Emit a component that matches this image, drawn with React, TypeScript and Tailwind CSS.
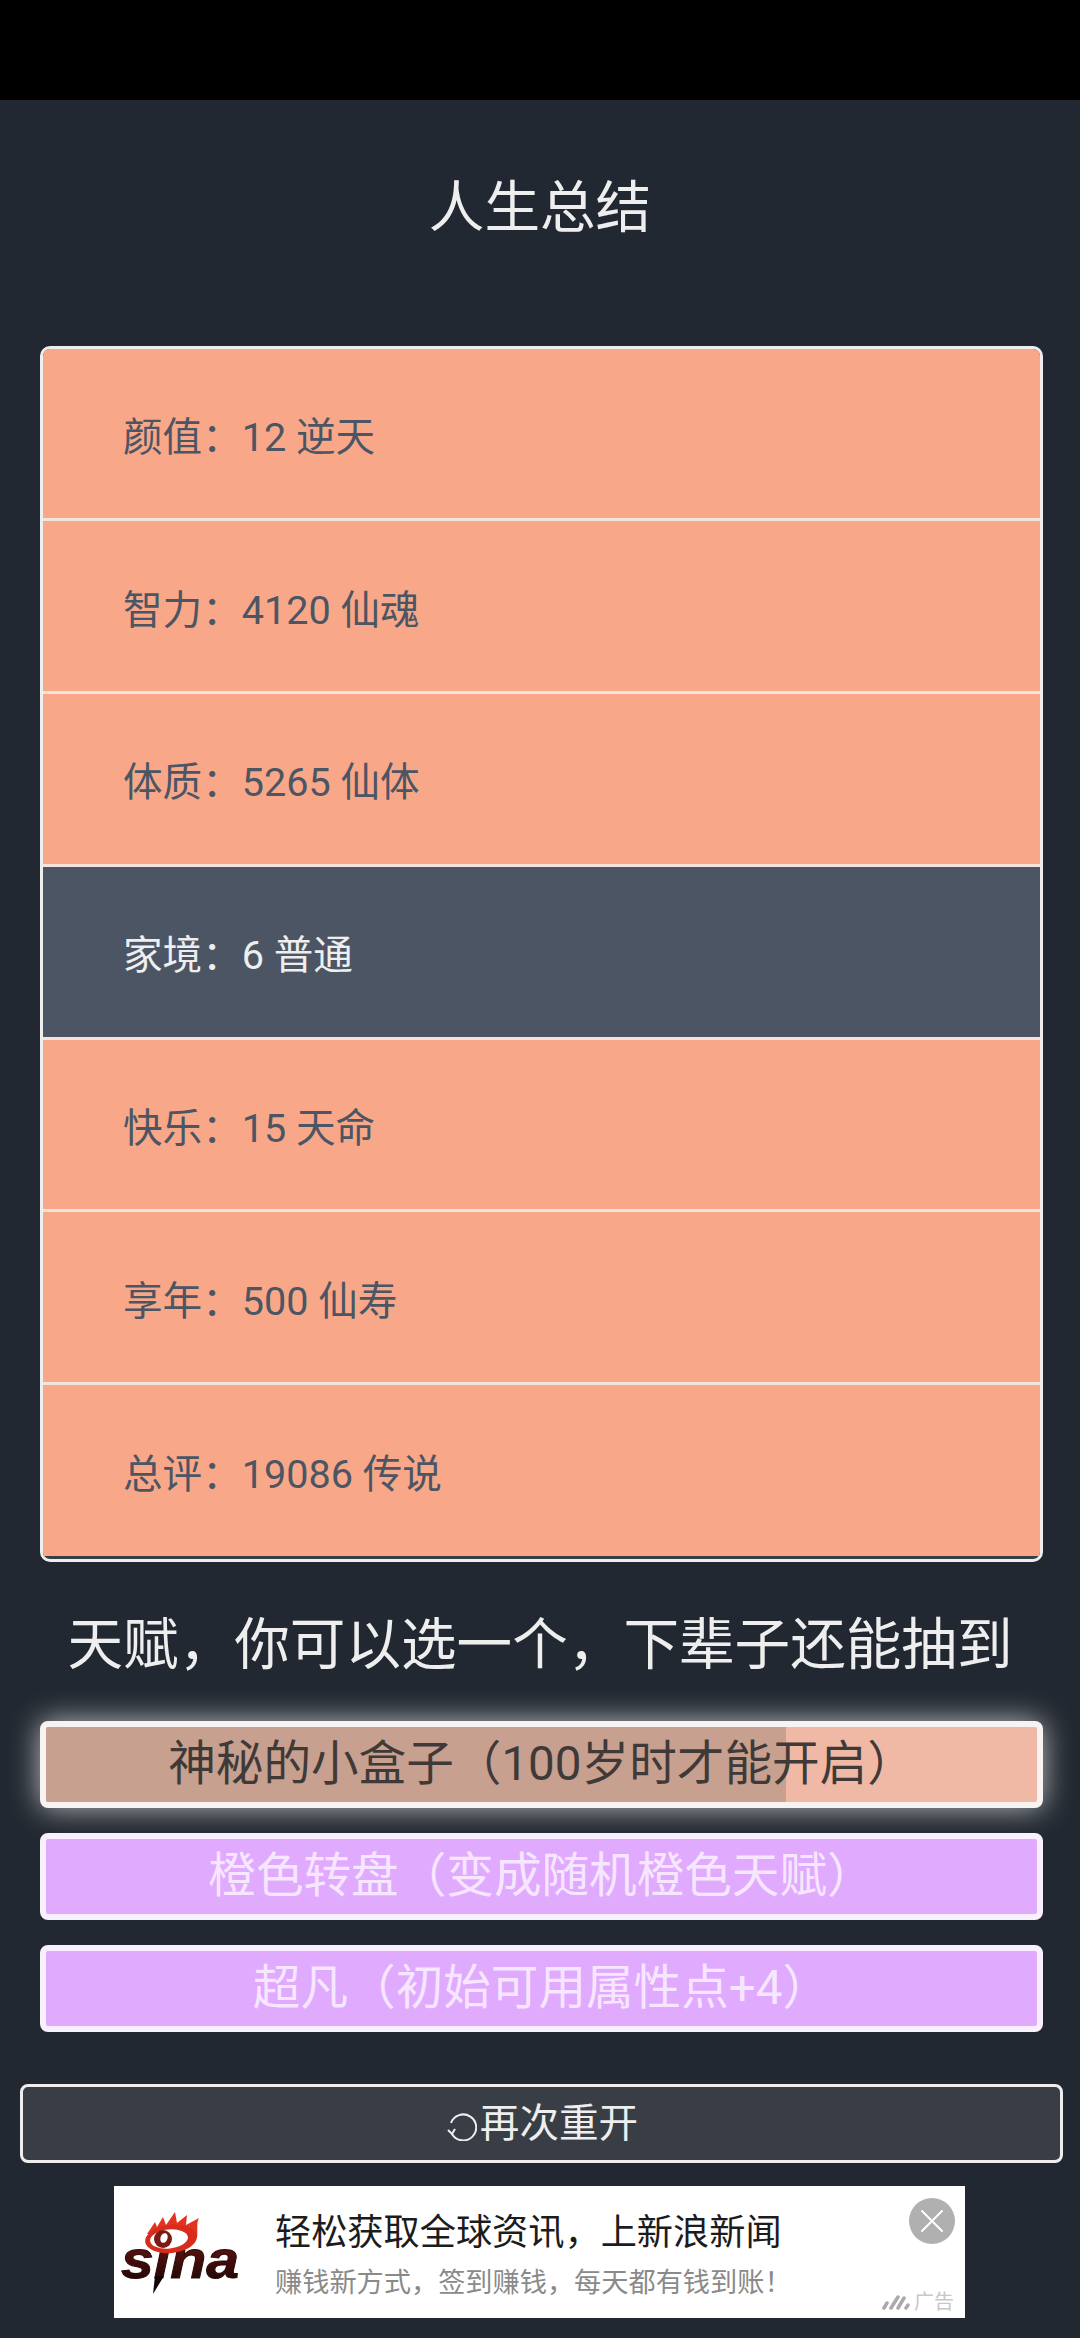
const FONT = "font-['Roboto','Noto_Sans_CJK_SC',sans-serif]";

const SUMMARY = [
  { label: '颜值：12 逆天', grade: 'orange' },
  { label: '智力：4120 仙魂', grade: 'orange' },
  { label: '体质：5265 仙体', grade: 'orange' },
  { label: '家境：6 普通', grade: 'plain' },
  { label: '快乐：15 天命', grade: 'orange' },
  { label: '享年：500 仙寿', grade: 'orange' },
  { label: '总评：19086 传说', grade: 'orange' },
];

const TALENTS = ['橙色转盘（变成随机橙色天赋）', '超凡（初始可用属性点+4）'];

function SinaLogo() {
  return (
    <svg width="120" height="86" viewBox="0 0 120 86">
      <defs>
        <linearGradient id="sinaText" x1="0" y1="0" x2="0" y2="1">
          <stop offset="0" stopColor="#7a1712" />
          <stop offset="1" stopColor="#120505" />
        </linearGradient>
      </defs>
      <text
        x="0"
        y="68"
        fontFamily="'Liberation Sans', sans-serif"
        fontWeight="700"
        fontStyle="italic"
        fontSize="54"
        textLength="118"
        lengthAdjust="spacingAndGlyphs"
        fill="url(#sinaText)"
        stroke="#2a0a08"
        strokeWidth="1"
      >
        sina
      </text>
      <path d="M34 66 L43 66 L32 84 Z" fill="#120505" />
      {/* flame crown */}
      <path
        d="M26 24 L34 12 L36 17 L42 7 L45 15 L54 2 L56 13 L66 5 L65 15 L78 8 C75 13 77 20 76 28 L50 24 Z"
        fill="#e2331f"
      />
      {/* eye */}
      <ellipse cx="50" cy="29" rx="26" ry="14" fill="#d92b1c" transform="rotate(-6 50 29)" />
      <ellipse cx="48" cy="29" rx="19" ry="9.5" fill="#ffffff" transform="rotate(-6 48 29)" />
      <ellipse cx="42" cy="29" rx="9" ry="9" fill="#7a1a12" />
      <ellipse cx="43" cy="28" rx="3.5" ry="5" fill="#ffffff" transform="rotate(20 43 28)" />
    </svg>
  );
}

function AdBanner() {
  return (
    <div className={`relative ml-[114px] mt-[22.5px] flex h-[132px] w-[851px] items-start bg-white ${FONT}`}>
      <div className="ml-[7px] mt-[24px] shrink-0">
        <SinaLogo />
      </div>
      <div className="ml-[34px] flex flex-col">
        <span className="mt-[24px] text-[36.2px] leading-[46px] text-[#1c1c1c]">轻松获取全球资讯，上新浪新闻</span>
        <span className="mt-[9px] text-[27.2px] leading-[36px] text-[#8a8a8a]">赚钱新方式，签到赚钱，每天都有钱到账！</span>
      </div>
      {/* close button */}
      <div className="absolute left-[795px] top-[12px] flex h-[46px] w-[46px] items-center justify-center rounded-full bg-[#b0b0b0]">
        <svg width="28" height="28" viewBox="0 0 28 28" stroke="#fff" strokeWidth="2" strokeLinecap="round">
          <path d="M4 4 L24 24 M24 4 L4 24" />
        </svg>
      </div>
      {/* ad mark */}
      <div className="absolute bottom-[2px] right-[11px] flex items-center gap-[3px] text-[20px] leading-[28px] text-[#c8c8c8]">
        <svg width="30" height="16" viewBox="0 0 30 16" stroke="#aaaaaa" strokeWidth="3.5" strokeLinecap="round">
          <path d="M3 14 L6 9 M10 14 L17 3 M17 14 L23 4 M25 14 L27 11" />
        </svg>
        <span>广告</span>
      </div>
    </div>
  );
}

export default function App() {
  return (
    <div className={`flex h-[2338px] w-[1080px] flex-col overflow-hidden bg-[#222831] ${FONT}`}>
      <div className="h-[100px] shrink-0 bg-black" />

      <h1 className="mt-[75px] text-center text-[55.6px] leading-[66px] text-[#eeeeee]">人生总结</h1>

      {/* summary table */}
      <div className="ml-[40px] mr-[37px] mt-[104.5px] overflow-hidden rounded-[10px] border-[3px] border-[#eeeeee] bg-[#393e46] pb-[3px]">
        {SUMMARY.map((row, i) => (
          <div
            key={row.label}
            className={
              (row.grade === 'orange' ? 'bg-[#f8a889] text-[#4b5563]' : 'bg-[#4b5563] text-[#eeeeee]') +
              ' flex items-center pl-[80px] text-[39.6px] ' +
              (i < SUMMARY.length - 1 ? 'h-[172.8px] border-b-[3px] border-[#f3e4de] pt-[8px]' : 'h-[170.5px] pt-[8px]')
            }
          >
            {row.label}
          </div>
        ))}
      </div>

      <h2 className="mt-[50.5px] text-center text-[55.6px] leading-[66px] text-[#eeeeee]">天赋，你可以选一个，下辈子还能抽到</h2>

      {/* talents */}
      <div className="ml-[40px] mr-[37px] mt-[43px] flex flex-col gap-[25px]">
        <div className="relative flex h-[87px] items-center justify-center overflow-hidden rounded-[8px] border-[6px] border-[#f7f3f2] bg-[#f0b9a6] text-[47.6px] text-[#3f3a38] shadow-[0_0_30px_rgba(255,255,255,0.7)]">
          <div className="absolute inset-y-0 left-0 w-[740px] bg-[#c8a08f]" />
          <span className="relative">神秘的小盒子（100岁时才能开启）</span>
        </div>
        {TALENTS.map((t) => (
          <div
            key={t}
            className="flex h-[87px] items-center justify-center rounded-[8px] border-[6px] border-[#f9f0fd] bg-[#e0aaff] text-[47.6px] text-[#f7e6ff]"
          >
            {t}
          </div>
        ))}
      </div>

      {/* restart */}
      <div className="ml-[20px] mr-[17px] mt-[52px] flex h-[79px] items-center justify-center rounded-[8px] border-[3px] border-[#eeeeee] bg-[#393e46] pl-[2px] text-[39.6px] text-[#eeeeee]">
        <svg width="30" height="30" viewBox="0 0 30 30" fill="none" stroke="#eeeeee" strokeWidth="2" className="mt-[4px]">
          <path d="M4 12 A13 13 0 1 1 5 23" />
          <path d="M1 19 L5 23 L8 18" />
        </svg>
        <span className="ml-[3px]">再次重开</span>
      </div>

      <AdBanner />
    </div>
  );
}
